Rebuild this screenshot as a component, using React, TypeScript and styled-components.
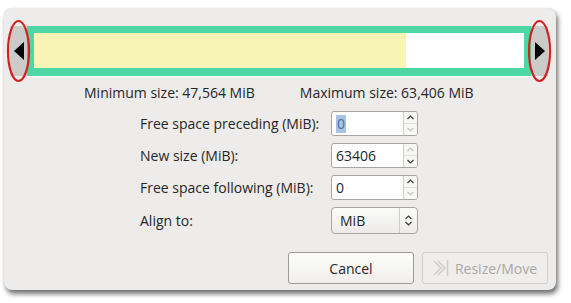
import React from 'react';
import styled, { createGlobalStyle } from 'styled-components';

const GlobalStyle = createGlobalStyle`
  html, body {
    margin: 0;
    padding: 0;
    background: #ffffff;
    font-family: "Open Sans", "DejaVu Sans", sans-serif;
  }
`;

const Page = styled.div`
  width: 571px;
  height: 303px;
  padding: 8px 0 0 4px;
  box-sizing: border-box;
`;

const Dialog = styled.div`
  width: 552px;
  height: 282px;
  background: #edeceb;
  border-radius: 8px;
  box-shadow: 2px 4px 5px rgba(0, 0, 0, 0.55), 0 0 1px rgba(0, 0, 0, 0.2);
  display: flex;
  flex-direction: column;
  box-sizing: border-box;
  padding: 18px 8px 0 6px;
`;

const BarRow = styled.div`
  display: flex;
  align-items: stretch;
  height: 50px;
`;

const Handle = styled.div`
  position: relative;
  width: 17px;
  background: #cbccc9;
  display: flex;
  align-items: center;
  justify-content: center;
`;

const Ring = styled.svg`
  position: absolute;
  top: -6px;
  left: -4px;
  overflow: visible;
`;

const Partition = styled.div`
  flex: 1;
  border: 7px solid #4fd6a5;
  border-bottom-width: 8px;
  display: flex;
  box-shadow: 0 1px 0 #ffffff;
`;

const Used = styled.div<{ pct: number }>`
  width: ${(p) => p.pct}%;
  background: #f8f4b6;
`;

const Unused = styled.div`
  flex: 1;
  background: #ffffff;
`;

const SizeRow = styled.div`
  display: flex;
  gap: 45px;
  padding-left: 74px;
  margin-top: 7px;
  font-size: 14px;
  color: #262626;
`;

const Form = styled.div`
  display: grid;
  grid-template-columns: 191px 87px;
  row-gap: 7px;
  margin: 9px 0 0 130px;
  align-items: center;
  font-size: 14px;
  color: #262626;
`;

const Label = styled.div`
  white-space: nowrap;
`;

const Spin = styled.div`
  display: flex;
  height: 25px;
  border: 1px solid #a8a6a2;
  border-radius: 3px;
  background: #ffffff;
  box-sizing: border-box;
  overflow: hidden;
`;

const SpinText = styled.div`
  flex: 1;
  display: flex;
  align-items: center;
  padding-left: 4px;
  font-size: 14px;
  color: #262626;
`;

const Selected = styled.span`
  background: #a9c3e2;
  color: #4a6ea8;
  padding: 0 1px;
  line-height: 18px;
`;

const SpinButtons = styled.div`
  width: 13px;
  border-left: 1px solid #d0cecb;
  display: flex;
  flex-direction: column;
  background: #f7f7f6;
`;

const SpinArrow = styled.div<{ dim?: boolean }>`
  flex: 1;
  display: flex;
  align-items: center;
  justify-content: center;
  color: ${(p) => (p.dim ? '#c4c4c2' : '#3c3c3c')};
  & + & {
    border-top: 1px solid #dedcd9;
  }
`;

const Combo = styled.div`
  display: flex;
  height: 27px;
  border: 1px solid #a8a6a2;
  border-radius: 4px;
  background: linear-gradient(#fbfbfa, #ecebe9);
  box-sizing: border-box;
  align-items: center;
`;

const ComboText = styled.div`
  flex: 1;
  padding-left: 8px;
  font-size: 14px;
  color: #262626;
`;

const ComboArrows = styled.div`
  width: 17px;
  height: 100%;
  border-left: 1px solid #cfcdca;
  display: flex;
  align-items: center;
  justify-content: center;
`;

const Buttons = styled.div`
  display: flex;
  justify-content: flex-end;
  gap: 8px;
  margin-top: auto;
  margin-bottom: 6px;
`;

const Button = styled.button<{ disabled?: boolean }>`
  width: 126px;
  height: 32px;
  border: 1px solid ${(p) => (p.disabled ? '#cfcdca' : '#9d9b97')};
  border-radius: 3px;
  background: ${(p) => (p.disabled ? '#efeeed' : 'linear-gradient(#fdfdfc, #efeeec)')};
  font-family: "Open Sans", "DejaVu Sans", sans-serif;
  font-size: 14px;
  color: ${(p) => (p.disabled ? '#a9a8a5' : '#262626')};
  display: flex;
  align-items: center;
  justify-content: center;
  gap: 6px;
  padding: 0;
`;

const Up = () => (
  <svg width="7" height="5" viewBox="0 0 7 5">
    <path d="M0.5 4 L3.5 1 L6.5 4" fill="none" stroke="currentColor" strokeWidth="1.2" />
  </svg>
);

const Down = () => (
  <svg width="7" height="5" viewBox="0 0 7 5">
    <path d="M0.5 1 L3.5 4 L6.5 1" fill="none" stroke="currentColor" strokeWidth="1.2" />
  </svg>
);

type SpinProps = { value: string; selected?: boolean; upDim?: boolean; downDim?: boolean };

const SpinBox: React.FC<SpinProps> = ({ value, selected, upDim, downDim }) => (
  <Spin>
    <SpinText>{selected ? <Selected>{value}</Selected> : value}</SpinText>
    <SpinButtons>
      <SpinArrow dim={upDim}><Up /></SpinArrow>
      <SpinArrow dim={downDim}><Down /></SpinArrow>
    </SpinButtons>
  </Spin>
);

const Grip: React.FC<{ side: 'left' | 'right' }> = ({ side }) => (
  <Handle>
    <svg width="10" height="18" viewBox="0 0 10 18">
      {side === 'left' ? <path d="M10 0 L0 9 L10 18 Z" fill="#000" /> : <path d="M0 0 L10 9 L0 18 Z" fill="#000" />}
    </svg>
    <Ring width="25" height="62" viewBox="0 0 25 62">
      <ellipse cx="12.5" cy="31" rx="10.5" ry="30" fill="none" stroke="#d42020" strokeWidth="2.2" />
    </Ring>
  </Handle>
);

export default function App() {
  return (
    <Page>
      <GlobalStyle />
      <Dialog>
        <BarRow>
          <Grip side="left" />
          <Partition>
            <Used pct={76} />
            <Unused />
          </Partition>
          <Grip side="right" />
        </BarRow>
        <SizeRow>
          <span>Minimum size: 47,564 MiB</span>
          <span>Maximum size: 63,406 MiB</span>
        </SizeRow>
        <Form>
          <Label>Free space preceding (MiB):</Label>
          <SpinBox value="0" selected downDim />
          <Label>New size (MiB):</Label>
          <SpinBox value="63406" upDim />
          <Label>Free space following (MiB):</Label>
          <SpinBox value="0" downDim />
          <Label>Align to:</Label>
          <Combo>
            <ComboText>MiB</ComboText>
            <ComboArrows>
              <svg width="7" height="11" viewBox="0 0 7 11">
                <path d="M0.5 4 L3.5 1 L6.5 4 M0.5 7 L3.5 10 L6.5 7" fill="none" stroke="#3c3c3c" strokeWidth="1.2" />
              </svg>
            </ComboArrows>
          </Combo>
        </Form>
        <Buttons>
          <Button>Cancel</Button>
          <Button disabled>
            <svg width="16" height="18" viewBox="0 0 16 18">
              <path d="M1 2 L8 9 L1 16 M5 2 L12 9 L5 16" fill="none" stroke="#cfcecb" strokeWidth="1.5" />
              <path d="M14.5 1 V17" stroke="#cfcecb" strokeWidth="1.5" />
            </svg>
            Resize/Move
          </Button>
        </Buttons>
      </Dialog>
    </Page>
  );
}
